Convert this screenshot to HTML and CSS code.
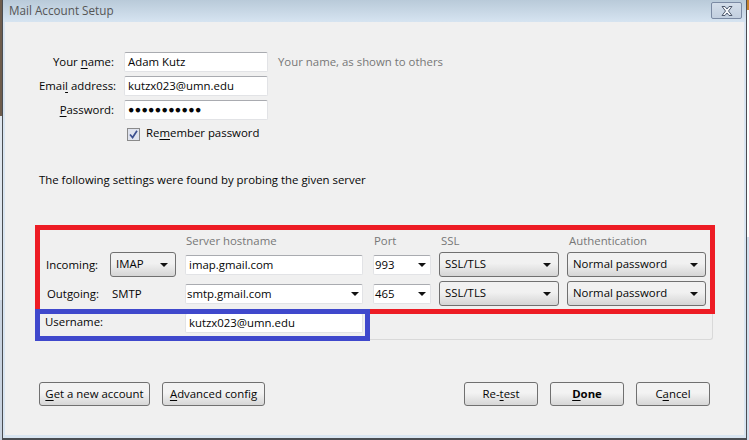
FILE: index.html
```html
<!DOCTYPE html>
<html lang="en">
<head>
  <meta charset="UTF-8">
  <title>Mail Account Setup</title>
  <link rel="stylesheet" href="styles.css">
</head>
<body>
  <div class="desk desk-left"></div>
  <div class="window">
    <header class="titlebar">
      <span class="title">Mail Account Setup</span>
      <button class="close-btn" aria-label="Close">
        <svg width="12" height="10" viewBox="0 0 12 10">
          <path d="M1 0.5 h3 l2 2.5 l2 -2.5 h3 l-3.5 4.5 l3.5 4.5 h-3 l-2 -2.5 l-2 2.5 h-3 l3.5 -4.5 z" fill="#f4f6f9" stroke="#4f5a6e" stroke-width="1"/>
        </svg>
      </button>
    </header>

    <main class="content">
      <section class="identity">
        <label class="id-label">Your <u>n</u>ame:</label>
        <div class="field">Adam Kutz</div>
        <span class="hint">Your name, as shown to others</span>

        <label class="id-label">Emai<u>l</u> address:</label>
        <div class="field">kutzx023@umn.edu</div>
        <span></span>

        <label class="id-label"><u>P</u>assword:</label>
        <div class="field dots">●●●●●●●●●●●</div>
        <span></span>

        <span></span>
        <div class="remember">
          <span class="checkbox">
            <svg width="9" height="9" viewBox="0 0 9 9"><path d="M1 4.5 L3.6 7.5 L8 0.8" fill="none" stroke="#3b4f8f" stroke-width="1.7"/></svg>
          </span>
          <span class="remember-text">Re<u>m</u>ember password</span>
        </div>
        <span></span>
      </section>

      <p class="status">The following settings were found by probing the given server</p>

      <section class="settings">
        <span></span>
        <span></span>
        <span class="col-head head-host">Server hostname</span>
        <span class="col-head head-port">Port</span>
        <span class="col-head head-select">SSL</span>
        <span class="col-head head-select">Authentication</span>

        <span class="row-label">Incoming:</span>
        <div class="select proto">IMAP<i class="arrow"></i></div>
        <div class="field host">imap.gmail.com</div>
        <div class="field port">993<i class="arrow"></i></div>
        <div class="select ssl">SSL/TLS<i class="arrow"></i></div>
        <div class="select auth">Normal password<i class="arrow"></i></div>

        <span class="row-label outgoing">Outgoing:</span>
        <span class="proto-text">SMTP</span>
        <div class="field host host-combo">smtp.gmail.com<i class="arrow"></i></div>
        <div class="field port">465<i class="arrow"></i></div>
        <div class="select ssl">SSL/TLS<i class="arrow"></i></div>
        <div class="select auth">Normal password<i class="arrow"></i></div>

        <span class="user-label">Username:</span>
        <div class="field host user-field">kutzx023@umn.edu</div>
      </section>

      <footer class="actions">
        <button class="btn btn-account"><u>G</u>et a new account</button>
        <button class="btn btn-advanced"><u>A</u>dvanced config</button>
        <span class="spacer"></span>
        <button class="btn btn-wide">Re-<u>t</u>est</button>
        <button class="btn btn-wide done"><u>D</u>one</button>
        <button class="btn btn-wide">C<u>a</u>ncel</button>
      </footer>
    </main>

    <!-- annotations drawn over the screenshot -->
    <div class="mark mark-red"></div>
    <div class="mark mark-blue"></div>
  </div>
  <div class="desk desk-right"></div>
</body>
</html>
```

FILE: styles.css
```css
* {
  box-sizing: border-box;
}

html, body {
  margin: 0;
}

body {
  width: 749px;
  height: 440px;
  display: flex;
  overflow: hidden;
  background-color: #4a4a4a;
  font-family: "Open Sans", "Noto Sans", sans-serif;
  font-size: 11.4px;
  color: #050505;
}

u {
  text-decoration-thickness: 1px;
  text-underline-offset: 2px;
}

.desk {
  width: 2px;
  flex: none;
}

.desk-left {
  background: linear-gradient(#6e5c4c 0 116px, #dfe6ee 116px 300px, #c9d3e0 300px);
}

.desk-right {
  background: linear-gradient(#c8822c 0 10px, #ffffff 10px 237px, #d3e0ef 237px);
}

.window {
  position: relative;
  width: 745px;
  height: 440px;
  flex: none;
  padding: 0 2px;
  background-color: #f0f0f0;
  border-left: 1px solid #4a4d52;
  border-right: 1px solid #4a4d52;
  border-bottom: 2px solid #4a4d52;
  box-shadow: inset 2px 0 #d9e5f1, inset -2px 0 #d9e5f1, inset 0 -3px #d9e5f1;
}

.titlebar {
  height: 22px;
  margin: 0 -2px;
  padding: 2px 4px 0 6px;
  display: flex;
  justify-content: space-between;
  background: linear-gradient(#b9cad9, #d6e4f1);
}

.title {
  font-size: 11.7px;
  line-height: 17px;
  color: #555;
}

.close-btn {
  width: 31px;
  height: 17px;
  padding: 0;
  display: flex;
  align-items: center;
  justify-content: center;
  background: linear-gradient(#d4deea, #c2cfdf);
  border: 1px solid #7b8aa3;
  border-radius: 2px;
}

.content {
  padding: 28px 0 0 34px;
}

.identity {
  display: grid;
  grid-template-columns: 75px 144px auto;
  grid-auto-rows: 24px;
  column-gap: 10px;
  align-items: center;
}

.id-label {
  padding-bottom: 2px;
  text-align: right;
  white-space: nowrap;
}

.field {
  position: relative;
  height: 20px;
  line-height: 17px;
  padding-left: 3px;
  background-color: white;
  border: 1px solid #e2e3e6;
  border-top-color: #a9abb0;
  border-radius: 2px;
}

.hint {
  padding-bottom: 2px;
  color: #777;
}

.dots {
  font-size: 10.5px;
  letter-spacing: 0.35px;
}

.remember {
  display: flex;
  align-items: center;
  gap: 6px;
  margin-left: 3px;
}

.remember-text {
  padding-bottom: 3px;
}

.checkbox {
  width: 13px;
  height: 13px;
  display: flex;
  align-items: center;
  justify-content: center;
  background-color: #dfe3ee;
  border: 1px solid #8a8a8a;
}

.status {
  margin: 25px 0 0;
  line-height: 18px;
}

.settings {
  margin: 39px 0 0 -1px;
  width: 675px;
  height: 112px;
  padding: 4px 0 0 8px;
  display: grid;
  grid-template-columns: 64px 75px 188px 66px 128px 139px;
  grid-template-rows: 18px 29px 29px 29px;
  align-items: center;
  white-space: nowrap;
  border-right: 1px solid #d9d9d9;
  border-bottom: 1px solid #d9d9d9;
  border-radius: 0 0 3px 0;
}

.col-head {
  padding-bottom: 2px;
  color: #777;
}

.head-host { padding-left: 1px; }
.head-port { padding-left: 1px; }
.head-select { padding-left: 2px; }

.outgoing {
  padding-left: 1px;
}

.user-label {
  grid-column: 1 / 3;
  margin-left: -1px;
  padding-bottom: 2px;
}

.user-field {
  grid-column: 3;
}

.select {
  position: relative;
  height: 25px;
  line-height: 22px;
  padding-left: 5px;
  background: linear-gradient(#f1f1f1 45%, #d5d5d5);
  border: 1px solid #707070;
  border-radius: 3px;
}

.proto { width: 66px; }
.ssl { width: 120px; }
.auth { width: 139px; }

.host { width: 178px; }

.port {
  width: 58px;
  padding-left: 1px;
}

.arrow {
  position: absolute;
  right: 7px;
  top: 50%;
  margin-top: -2px;
  border-left: 4px solid transparent;
  border-right: 4px solid transparent;
  border-top: 4px solid #111;
}

.port .arrow {
  right: 4px;
}

.host-combo .arrow {
  right: 3px;
}

.proto-text {
  padding-left: 2px;
}

.host-combo {
  padding-left: 1px;
}

.actions {
  margin: 42px 0 0;
  width: 671px;
  display: flex;
  gap: 12px;
}

.spacer {
  flex: 1;
}

.btn {
  height: 24px;
  padding: 0 0 2px;
  font: inherit;
  color: #050505;
  background: linear-gradient(#f3f3f3 45%, #d6d6d6);
  border: 1px solid #707070;
  border-radius: 3px;
}

.btn-account { width: 111px; }
.btn-advanced { width: 103px; }
.btn-wide { width: 74px; }

.done {
  font-weight: bold;
}

.mark {
  position: absolute;
  border-style: solid;
  border-width: 5px;
}

.mark-red {
  left: 32px;
  top: 225px;
  width: 680px;
  height: 89px;
  border-color: #ed1c24;
}

.mark-blue {
  left: 32px;
  top: 309px;
  width: 335px;
  height: 32px;
  border-color: #3f48cc;
}
```
